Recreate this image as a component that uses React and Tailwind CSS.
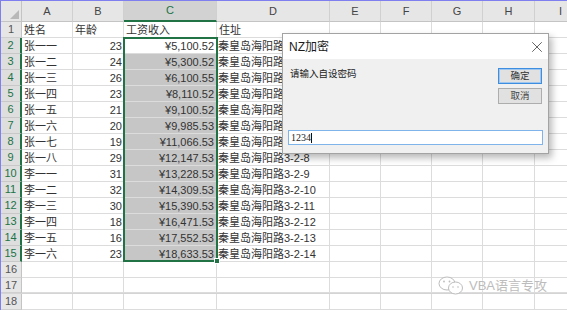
import React from 'react';
import { X } from 'lucide-react';

// column widths taken from the screenshot
const COLS = [
  { key: 'A', cls: 'w-[51px]' },
  { key: 'B', cls: 'w-[51px]' },
  { key: 'C', cls: 'w-[93px]' },
  { key: 'D', cls: 'w-[113px]' },
  { key: 'E', cls: 'w-[51px]' },
  { key: 'F', cls: 'w-[51px]' },
  { key: 'G', cls: 'w-[51px]' },
  { key: 'H', cls: 'w-[52px]' },
  { key: 'I', cls: 'w-[52px]' },
];

const people = [
  ['张一一', 23, '¥5,100.52'],
  ['张一二', 24, '¥5,300.52'],
  ['张一三', 26, '¥6,100.55'],
  ['张一四', 23, '¥8,110.52'],
  ['张一五', 21, '¥9,100.52'],
  ['张一六', 20, '¥9,985.53'],
  ['张一七', 19, '¥11,066.53'],
  ['张一八', 29, '¥12,147.53'],
  ['李一一', 31, '¥13,228.53'],
  ['李一二', 32, '¥14,309.53'],
  ['李一三', 30, '¥15,390.53'],
  ['李一四', 18, '¥16,471.53'],
  ['李一五', 16, '¥17,552.53'],
  ['李一六', 23, '¥18,633.53'],
];

const cell = 'shrink-0 h-full border-r border-b border-[#dcdcdc] whitespace-nowrap leading-[16px]';

function RowHead({ n, selected }) {
  return (
    <div
      className={`w-[21px] shrink-0 h-full flex items-center justify-center text-[11px] border-b ${
        selected
          ? 'bg-[#dedede] text-[#217346] border-b-[#c8c8c8] border-r-2 border-r-[#217346]'
          : 'bg-[#e6e6e6] text-[#555] border-b-[#cfcfcf] border-r border-r-[#c4c4c4]'
      }`}
    >
      {n}
    </div>
  );
}

function EmptyCells() {
  return (
    <>
      <div className={`${cell} w-[51px]`} />
      <div className={`${cell} w-[51px]`} />
      <div className={`${cell} w-[51px]`} />
      <div className={`${cell} w-[52px]`} />
      <div className={`${cell} w-[52px]`} />
    </>
  );
}

function HeaderRow() {
  return (
    <div className="flex h-[21px]">
      <div className="w-[21px] shrink-0 h-full bg-[#e6e6e6] border-r border-b border-[#c4c4c4] flex items-end justify-end p-[2px]">
        <svg width="9" height="9" viewBox="0 0 9 9">
          <polygon points="9,0 9,9 0,9" fill="#b8b8b8" />
        </svg>
      </div>
      {COLS.map((c) => (
        <div
          key={c.key}
          className={`${c.cls} shrink-0 h-full flex items-center justify-center text-[11px] border-r border-r-[#d0d0d0] ${
            c.key === 'C'
              ? 'bg-[#d2d2d2] text-[#217346] border-b-2 border-b-[#217346]'
              : 'bg-[#e6e6e6] text-[#444] border-b border-b-[#c4c4c4]'
          }`}
        >
          {c.key}
        </div>
      ))}
    </div>
  );
}

export default function App() {
  return (
    <div className="relative w-[567px] h-[310px] overflow-hidden bg-white border-l border-t border-[#7f7ff0] font-['Liberation_Sans','Noto_Sans_CJK_SC',sans-serif] text-[11px] text-[#333]">
      <HeaderRow />

      {/* row 1: titles */}
      <div className="flex h-[16px]">
        <RowHead n={1} />
        <div className={`${cell} w-[51px] pl-[2px]`}>姓名</div>
        <div className={`${cell} w-[51px] pl-[2px]`}>年龄</div>
        <div className={`${cell} w-[93px] pl-[2px]`}>工资收入</div>
        <div className={`${cell} w-[113px] pl-[2px]`}>住址</div>
        <EmptyCells />
      </div>

      {people.map(([name, age, pay], i) => (
        <div key={name} className="flex h-[16px]">
          <RowHead n={i + 2} selected />
          <div className={`${cell} w-[51px] pl-[2px]`}>{name}</div>
          <div className={`${cell} w-[51px] pr-[1px] text-right`}>{age}</div>
          <div
            className={`${cell} w-[93px] pr-[2px] text-right ${
              i === 0 ? 'bg-white' : 'bg-[#c6c6c6] border-[#b4b4b4]'
            }`}
          >
            {pay}
          </div>
          <div className={`${cell} w-[113px] pl-[1px]`}>秦皇岛海阳路3-2-{i + 1}</div>
          <EmptyCells />
        </div>
      ))}

      {[16, 17, 18].map((n) => (
        <div key={n} className={`flex h-[16px] ${n === 17 ? 'border-b border-[#d4d4d4]' : ''}`}>
          <RowHead n={n} />
          <div className={`${cell} w-[51px]`} />
          <div className={`${cell} w-[51px]`} />
          <div className={`${cell} w-[93px]`} />
          <div className={`${cell} w-[113px]`} />
          <EmptyCells />
        </div>
      ))}

      {/* selection C2:C15 */}
      <div className="absolute left-[122px] top-[36px] w-[95px] h-[225px] border-2 border-[#217346] pointer-events-none">
        <div className="absolute -right-[4px] -bottom-[4px] w-[6px] h-[6px] bg-[#217346] border border-white" />
      </div>

      {/* NZ加密 dialog */}
      <div className="absolute left-[281px] top-[32px] w-[267px] h-[121px] flex flex-col border border-[#a3a3a3] bg-[#f0f0f0] shadow-[3px_4px_7px_rgba(0,0,0,0.28)]">
        <div className="h-[25px] shrink-0 bg-white flex items-center justify-between pl-[6px] pr-[2px]">
          <span className="text-[12px] text-[#1a1a1a] leading-none">NZ加密</span>
          <X size={18} strokeWidth={1.1} className="text-[#444]" />
        </div>
        <div className="flex-1 flex flex-col px-[5px]">
          <div className="flex items-start justify-between pt-[9px]">
            <span className="ml-[2px] text-[9.5px] leading-[12px] text-[#222]">请输入自设密码</span>
            <div className="mr-[1px] flex flex-col gap-[4px]">
              <button className="w-[44px] h-[16px] flex items-center justify-center bg-[#e1e1e1] border border-[#3d8ee0] shadow-[inset_0_0_0_1px_#9fc6ee] text-[9.5px] text-[#333] leading-none">
                确定
              </button>
              <button className="w-[44px] h-[16px] flex items-center justify-center bg-[#e1e1e1] border border-[#adadad] text-[9.5px] text-[#444] leading-none">
                取消
              </button>
            </div>
          </div>
          <div className="mt-[26px] h-[15px] bg-white border border-[#7eb4ea] flex items-center pl-[2px]">
            <span className="font-['Liberation_Serif',serif] text-[10px] text-[#222] leading-none">1234</span>
            <span className="w-px h-[10px] bg-[#111]" />
          </div>
        </div>
      </div>

      {/* watermark */}
      <div className="absolute left-[437px] top-[275px] flex items-center gap-[5px] text-[#bcbcbc] [text-shadow:0_0_2px_#fff]">
        <svg width="26" height="19" viewBox="0 0 26 19" fill="none" stroke="#bdbdbd" strokeWidth="1">
          <ellipse cx="9" cy="7.5" rx="8" ry="6.5" fill="#fff" />
          <circle cx="6" cy="5.5" r="0.9" fill="#bdbdbd" stroke="none" />
          <circle cx="11.5" cy="5.5" r="0.9" fill="#bdbdbd" stroke="none" />
          <ellipse cx="17.5" cy="12" rx="7" ry="6" fill="#fff" />
          <circle cx="15" cy="11" r="0.8" fill="#bdbdbd" stroke="none" />
          <circle cx="20" cy="11" r="0.8" fill="#bdbdbd" stroke="none" />
        </svg>
        <span className="text-[13px] leading-none">VBA语言专攻</span>
      </div>
    </div>
  );
}
